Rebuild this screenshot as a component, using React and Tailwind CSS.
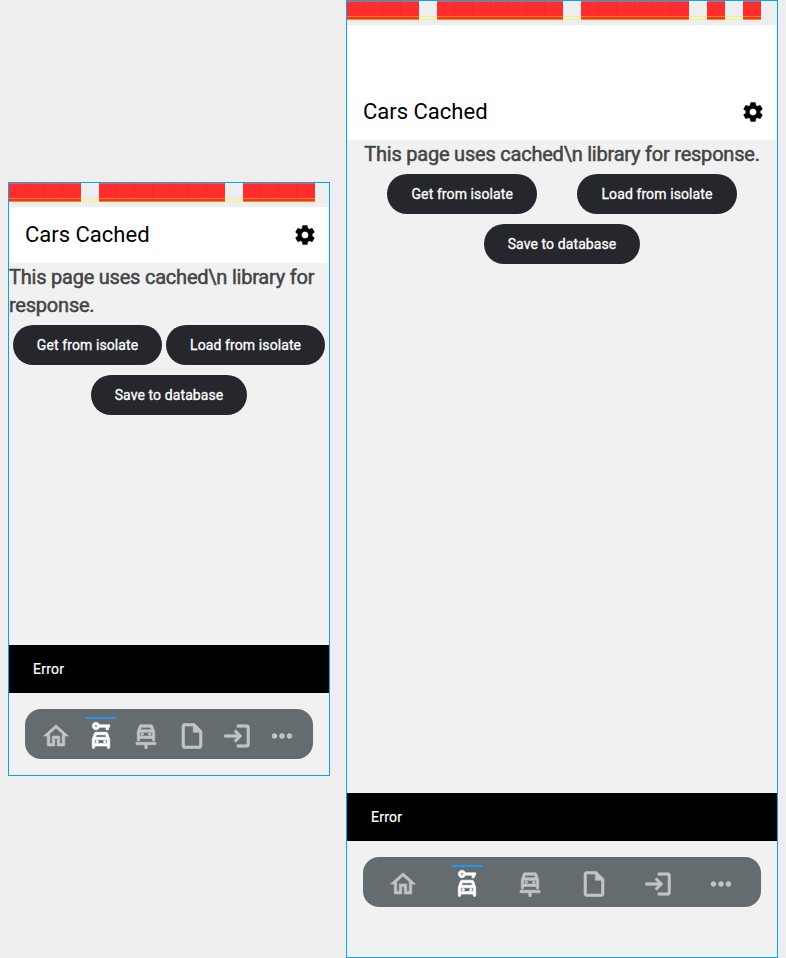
import React from "react";
import {
  MdSettings,
  MdOutlineHome,
  MdOutlineCarRental,
  MdOutlineCarRepair,
  MdOutlineInsertDriveFile,
  MdMoreHoriz,
} from "react-icons/md";

const Login = ({ size, className }) => (
  <svg width={size} height={size} viewBox="0 0 24 24" fill="currentColor" stroke="currentColor" className={className}>
    <path d="M11 7 9.6 8.4l2.6 2.6H2v2h10.2l-2.6 2.6L11 17l5-5-5-5zm9 12h-8v2h8c1.1 0 2-.9 2-2V5c0-1.1-.9-2-2-2h-8v2h8v14z" />
  </svg>
);

const TABS = [
  MdOutlineHome,
  MdOutlineCarRental,
  MdOutlineCarRepair,
  MdOutlineInsertDriveFile,
  Login,
  MdMoreHoriz,
];

function Label({ words }) {
  return (
    <div className="h-6 shrink-0 bg-[#eeeeee]">
      <div className="relative flex h-[19px] w-fit gap-[18px]">
        {words.map((n, i) => (
          <div key={i} className="flex bg-[#ff2d2d]">
            {Array.from({ length: n }, (_, k) => (
              <span key={k} className="h-full w-[18px] border-r border-t border-r-[#fb2829] border-t-[#f85555] last:border-r-[#ff2d2d]" />
            ))}
          </div>
        ))}
        <div className="absolute inset-x-0 bottom-0 h-1 border-y border-[#f9f900]/45" />
      </div>
    </div>
  );
}

function Button({ children }) {
  return (
    <button className="h-10 rounded-full bg-[#26272d] px-6 text-sm tracking-[0.1px] text-white [-webkit-text-stroke:0.3px_white]">
      {children}
    </button>
  );
}

function NavBar() {
  return (
    <nav className="mx-4 mt-4 flex h-[50px] shrink-0 rounded-2xl bg-[#656c6f] px-2 py-2">
      {TABS.map((Icon, i) => (
        <div key={i} className="flex flex-1 flex-col items-center gap-0.5">
          <div className={i === 1 ? "h-0.5 w-[30px] bg-[#2196f3]" : "h-0.5 w-[30px]"} />
          <div className={i === 1 ? "text-white" : "text-[#c1c4c5]"}>
            <Icon
              size={30}
              className="[stroke-width:0] [&>:not([fill=none])]:[stroke-width:0.5]"
            />
          </div>
        </div>
      ))}
    </nav>
  );
}

function Device({ words, frame, header, foot }) {
  return (
    <section className={`flex shrink-0 flex-col border border-[#00a8f3] bg-[#f1f1f1] ${frame}`}>
      <Label words={words} />
      <header className={`flex shrink-0 items-end bg-white ${header}`}>
        <div className="flex h-14 w-full items-center justify-between pl-4 pr-3">
          <h1 className="text-[22px] leading-7 text-black">Cars Cached</h1>
          <MdSettings size={24} color="#000" className="[&>:not([fill=none])]:[stroke-width:0.4]" />
        </div>
      </header>
      <main className="flex grow flex-col items-center">
        <p className="text-xl leading-7 tracking-[-0.22px] text-[#444444] [-webkit-text-stroke:0.5px_#444444]">This page uses cached\n library for response.</p>
        <div className="mt-1.5 flex w-full justify-evenly">
          <Button>Get from isolate</Button>
          <Button>Load from isolate</Button>
        </div>
        <div className="mt-2.5">
          <Button>Save to database</Button>
        </div>
      </main>
      <div className="flex h-12 shrink-0 items-center bg-black px-6 text-sm tracking-[0.25px] text-white [-webkit-text-stroke:0.2px_white]">Error</div>
      <NavBar />
      <div className={foot} />
    </section>
  );
}

export default function App() {
  return (
    <div className="flex h-[958px] w-[786px] items-start gap-4 overflow-hidden bg-[#eeeeee] pl-2 font-['Roboto',sans-serif]">
      <Device words={[4, 7, 4]} frame="mt-[182px] h-[594px] w-[322px]" header="h-14" foot="h-4 shrink-0" />
      <Device words={[4, 7, 6, 1, 1]} frame="h-[958px] w-[432px]" header="h-[115px]" foot="h-[50px] shrink-0" />
    </div>
  );
}
